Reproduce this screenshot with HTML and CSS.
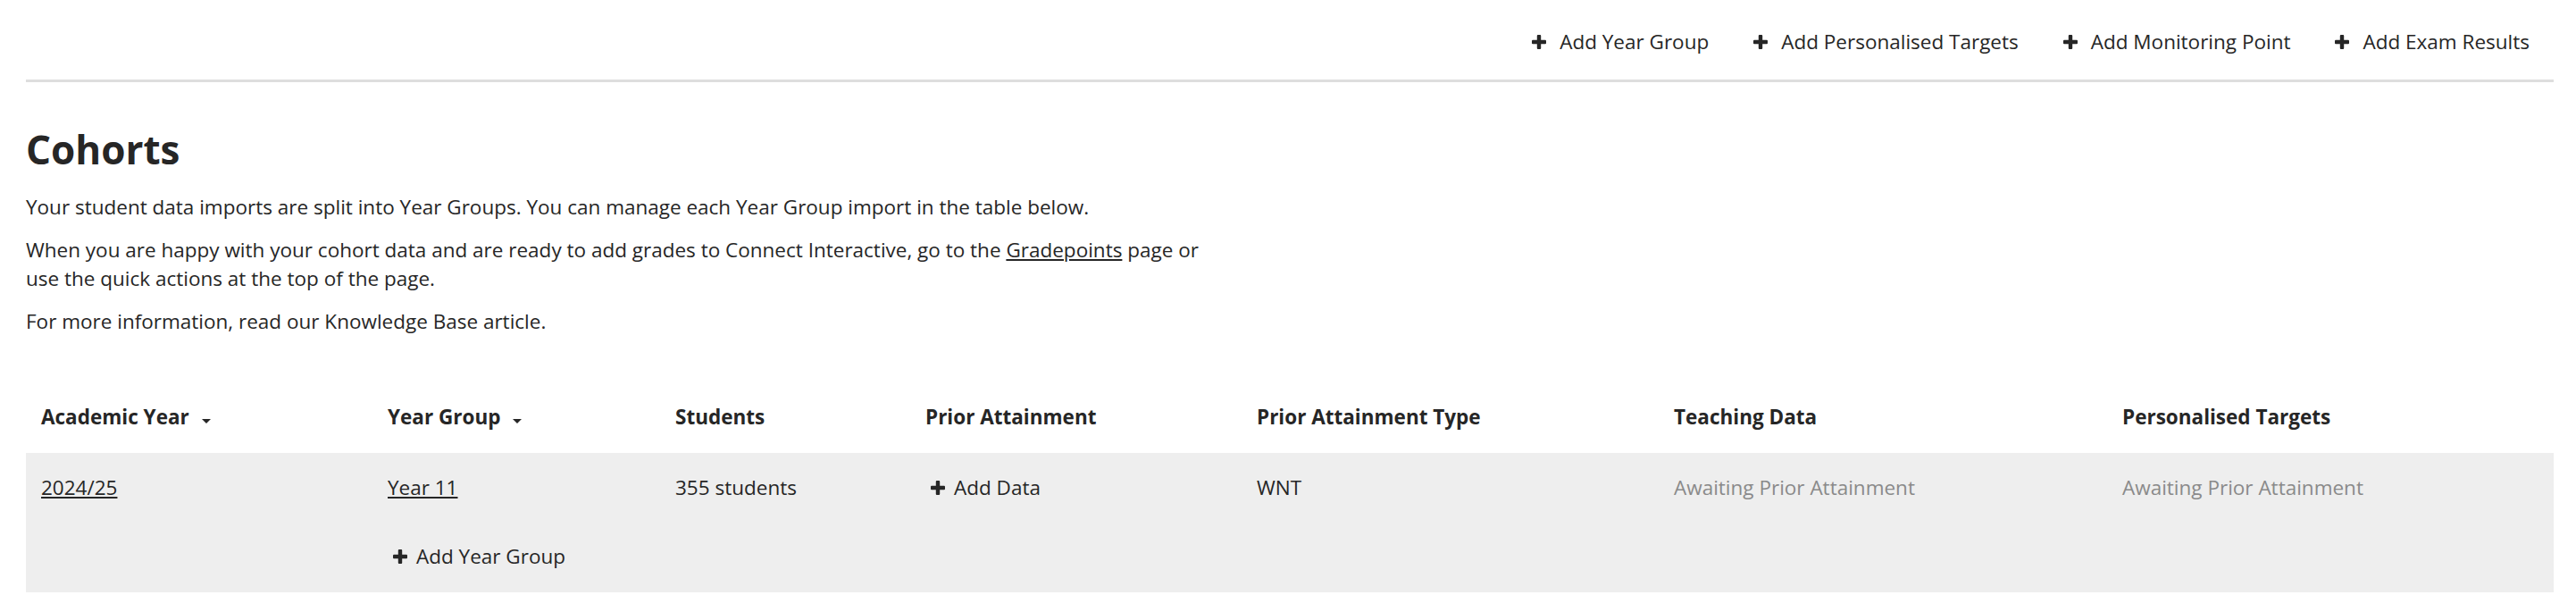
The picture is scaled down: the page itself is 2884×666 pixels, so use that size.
FILE: index.html
```html
<!DOCTYPE html>
<html lang="en">
<head>
  <meta charset="UTF-8" />
  <meta name="viewport" content="width=device-width, initial-scale=1.0"/>
  <title>Cohorts</title>
  <link rel="stylesheet" href="styles.css">
</head>
<body>
  <div class="page">
    <nav class="quick-actions">
      <a class="quick-action" href="#">
        <svg class="icon-plus" viewBox="0 0 16 16"><rect x="5.8" y="0" width="4.4" height="16" rx="1"/><rect x="0" y="5.8" width="16" height="4.4" rx="1"/></svg>
        Add Year Group
      </a>
      <a class="quick-action" href="#">
        <svg class="icon-plus" viewBox="0 0 16 16"><rect x="5.8" y="0" width="4.4" height="16" rx="1"/><rect x="0" y="5.8" width="16" height="4.4" rx="1"/></svg>
        Add Personalised Targets
      </a>
      <a class="quick-action" href="#">
        <svg class="icon-plus" viewBox="0 0 16 16"><rect x="5.8" y="0" width="4.4" height="16" rx="1"/><rect x="0" y="5.8" width="16" height="4.4" rx="1"/></svg>
        Add Monitoring Point
      </a>
      <a class="quick-action" href="#">
        <svg class="icon-plus" viewBox="0 0 16 16"><rect x="5.8" y="0" width="4.4" height="16" rx="1"/><rect x="0" y="5.8" width="16" height="4.4" rx="1"/></svg>
        Add Exam Results
      </a>
    </nav>

    <h1>Cohorts</h1>
    <p>Your student data imports are split into Year Groups. You can manage each Year Group import in the table below.</p>
    <p>When you are happy with your cohort data and are ready to add grades to Connect Interactive, go to the <a href="#">Gradepoints</a> page or use the quick actions at the top of the page.</p>
    <p>For more information, read our Knowledge Base article.</p>

    <table class="cohorts">
      <colgroup>
        <col class="col-year">
        <col class="col-group">
        <col class="col-students">
        <col class="col-prior">
        <col class="col-type">
        <col class="col-teaching">
        <col class="col-targets">
      </colgroup>
      <thead>
        <tr>
          <th>Academic Year <span class="sort-caret"></span></th>
          <th>Year Group <span class="sort-caret"></span></th>
          <th>Students</th>
          <th>Prior Attainment</th>
          <th>Prior Attainment Type</th>
          <th>Teaching Data</th>
          <th>Personalised Targets</th>
        </tr>
      </thead>
      <tbody>
        <tr class="cohort-row">
          <td><a href="#">2024/25</a></td>
          <td><a href="#">Year 11</a></td>
          <td>355 students</td>
          <td>
            <a class="add-link" href="#">
              <svg class="icon-plus" viewBox="0 0 16 16"><rect x="5.8" y="0" width="4.4" height="16" rx="1"/><rect x="0" y="5.8" width="16" height="4.4" rx="1"/></svg>
              Add Data
            </a>
          </td>
          <td>WNT</td>
          <td class="muted">Awaiting Prior Attainment</td>
          <td class="muted">Awaiting Prior Attainment</td>
        </tr>
        <tr class="add-row">
          <td></td>
          <td>
            <a class="add-link" href="#">
              <svg class="icon-plus" viewBox="0 0 16 16"><rect x="5.8" y="0" width="4.4" height="16" rx="1"/><rect x="0" y="5.8" width="16" height="4.4" rx="1"/></svg>
              Add Year Group
            </a>
          </td>
          <td></td>
          <td></td>
          <td></td>
          <td></td>
          <td></td>
        </tr>
      </tbody>
    </table>
  </div>
</body>
</html>
```

FILE: styles.css
```css
body {
  margin: 0;
  font-family: "Open Sans", "Liberation Sans", sans-serif;
  font-size: 22.5px;
  line-height: 32px;
  color: #262626;
  background: #fff;
}

.page {
  padding: 0 25px 0 29px;
}

a {
  color: inherit;
}

.quick-actions {
  display: flex;
  justify-content: flex-end;
  padding: 31px 0 26px;
  border-bottom: 3px solid #dedede;
}

.quick-action {
  display: flex;
  align-items: center;
  gap: 15px;
  padding: 0 25px;
  text-decoration: none;
}

.quick-action:last-child {
  padding-right: 27px;
}

.icon-plus {
  width: 16px;
  height: 16px;
  flex: none;
  fill: #262626;
}

h1 {
  margin: 48px 0 21px;
  font-size: 44px;
  line-height: 55px;
  font-weight: 700;
}

p {
  margin: 0 0 16px;
  max-width: 1340px;
}

.cohorts {
  width: 100%;
  margin-top: 51px;
  border-collapse: collapse;
  table-layout: fixed;
}

.col-year { width: 388px; }
.col-group { width: 322px; }
.col-students { width: 280px; }
.col-prior { width: 371px; }
.col-type { width: 467px; }
.col-teaching { width: 502px; }
.col-targets { width: 500px; }

.cohorts th {
  text-align: left;
  font-weight: 700;
  padding: 24px 17px;
  white-space: nowrap;
}

.sort-caret {
  display: inline-block;
  width: 0;
  height: 0;
  margin-left: 8px;
  border-left: 5px solid transparent;
  border-right: 5px solid transparent;
  border-top: 5px solid #262626;
  vertical-align: 1px;
}

.cohorts tbody {
  background: #eeeeee;
}

.cohorts td {
  padding: 23px 17px 22px;
  vertical-align: top;
}

.add-row td {
  padding-bottom: 24px;
}

.add-link {
  display: inline-flex;
  align-items: center;
  gap: 10px;
  padding-left: 6px;
  text-decoration: none;
}

.muted {
  color: #8a8a8a;
}
```
